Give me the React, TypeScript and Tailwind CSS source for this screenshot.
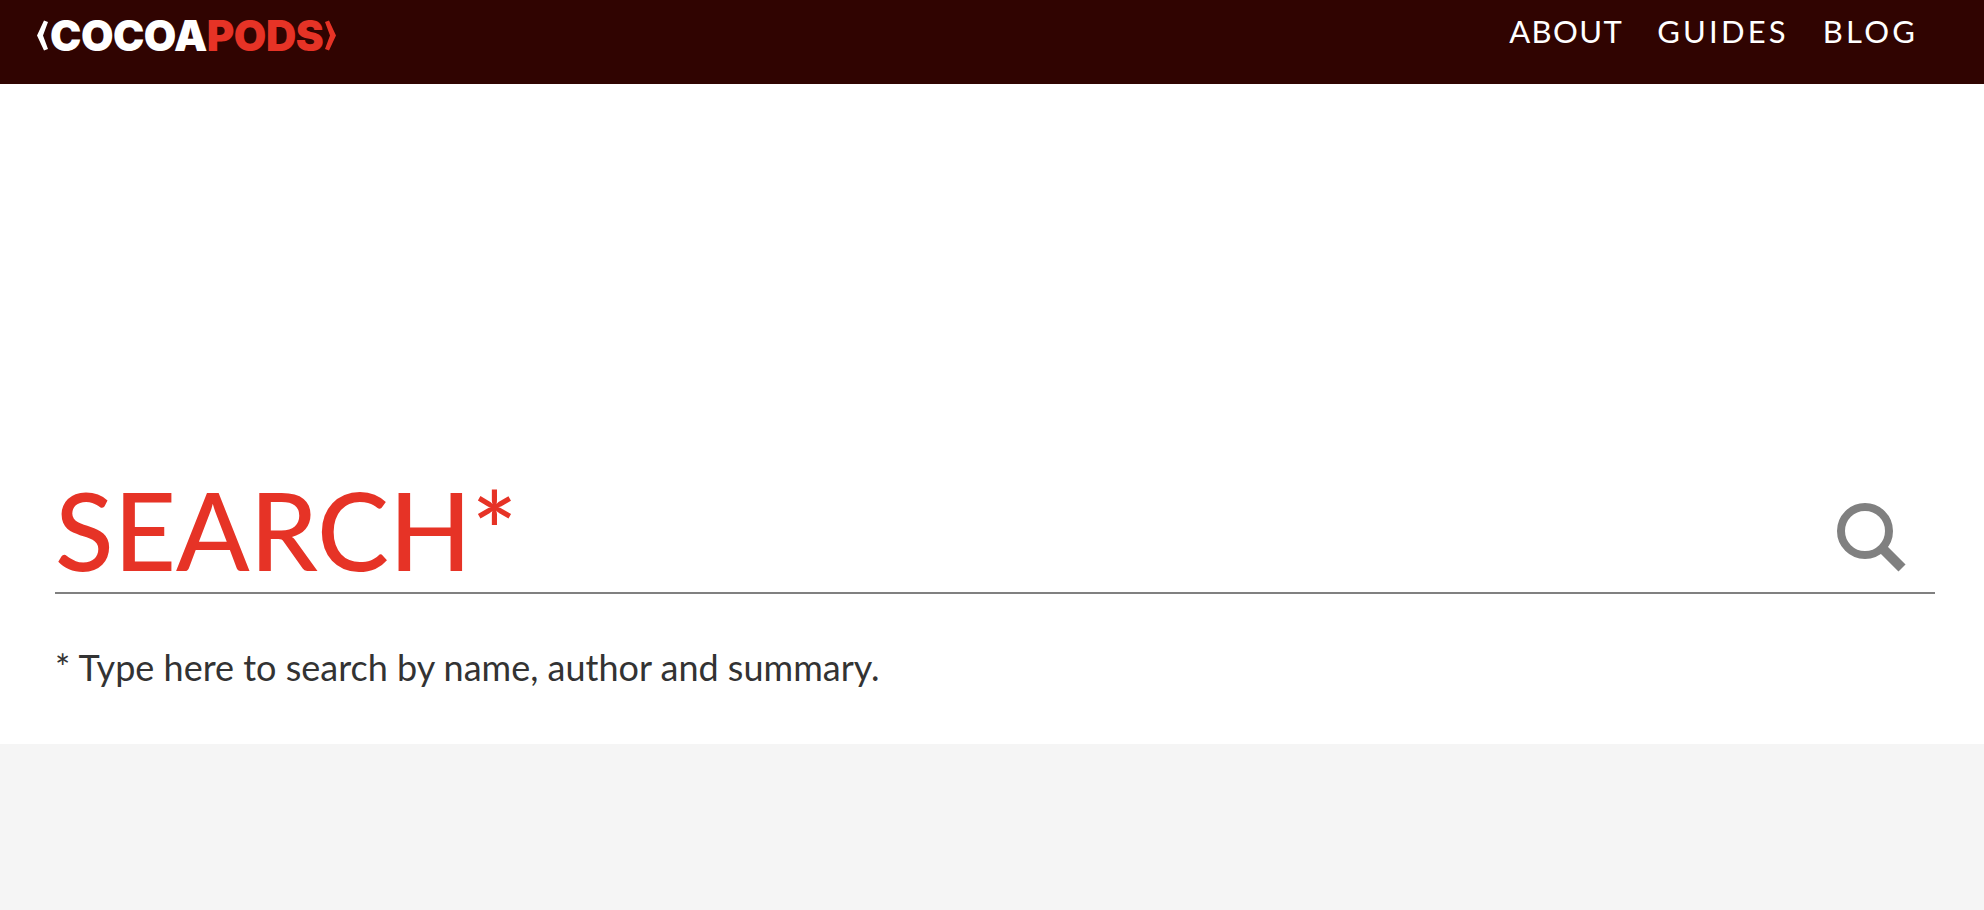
const navLinks = [
  { label: 'ABOUT', spacing: 'tracking-[1.4px]' },
  { label: 'GUIDES', spacing: 'tracking-[3.2px]' },
  { label: 'BLOG', spacing: 'tracking-[3.2px]' },
];

function Chevron({ flip }: { flip?: boolean }) {
  return (
    <svg width="11" height="31" viewBox="0 0 11 30" className={`shrink-0 ${flip ? 'rotate-180' : ''}`}>
      <path d="M7 0 L11 1.5 L6 15 L11 28.5 L7 30 L0 15 Z" fill={flip ? '#e63326' : '#ffffff'} />
    </svg>
  );
}

function SearchIcon() {
  return (
    <svg width="72" height="72" viewBox="0 0 72 72" fill="none" stroke="#808080">
      <circle cx="30" cy="30" r="24" strokeWidth="8" />
      <path d="M47 47 L67 67" strokeWidth="10" />
    </svg>
  );
}

export default function App() {
  return (
    <div className="min-h-[910px] bg-[#f5f5f5] font-['Lato',sans-serif]">
      <header className="h-[84px] bg-[#300401] flex items-start justify-between pl-[37px] pr-[66px]">
        <a href="#" className="flex items-center gap-[2px] mt-[20px] h-[31px]">
          <Chevron />
          <span className="font-['Inter',sans-serif] font-black text-[42px] leading-[31px] tracking-[-0.5px] text-white">
            COCOA<span className="text-[#e63326]">PODS</span>
          </span>
          <Chevron flip />
        </a>
        <nav className="flex items-center gap-[34px] h-[63px]">
          {navLinks.map((link) => (
            <a key={link.label} href="#" className={`font-['Lato',sans-serif] text-[31px] leading-none text-white ${link.spacing}`}>
              {link.label}
            </a>
          ))}
        </nav>
      </header>

      <main className="bg-white h-[660px] pl-[55px] pr-[49px] pt-[383px]">
        <div className="h-[127px] border-b-2 border-[#808080] flex items-start justify-between">
          <input
            type="text"
            placeholder="SEARCH*"
            className="flex-1 h-[124px] text-[108px] font-medium leading-none text-[#e63326] placeholder:text-[#e63326] outline-none"
          />
          <div className="mt-[34px] mr-[28px]">
            <SearchIcon />
          </div>
        </div>
        <p className="mt-[51px] text-[36px] leading-[44px] text-[#333333]">
          * Type here to search by name, author and summary.
        </p>
      </main>
    </div>
  );
}
